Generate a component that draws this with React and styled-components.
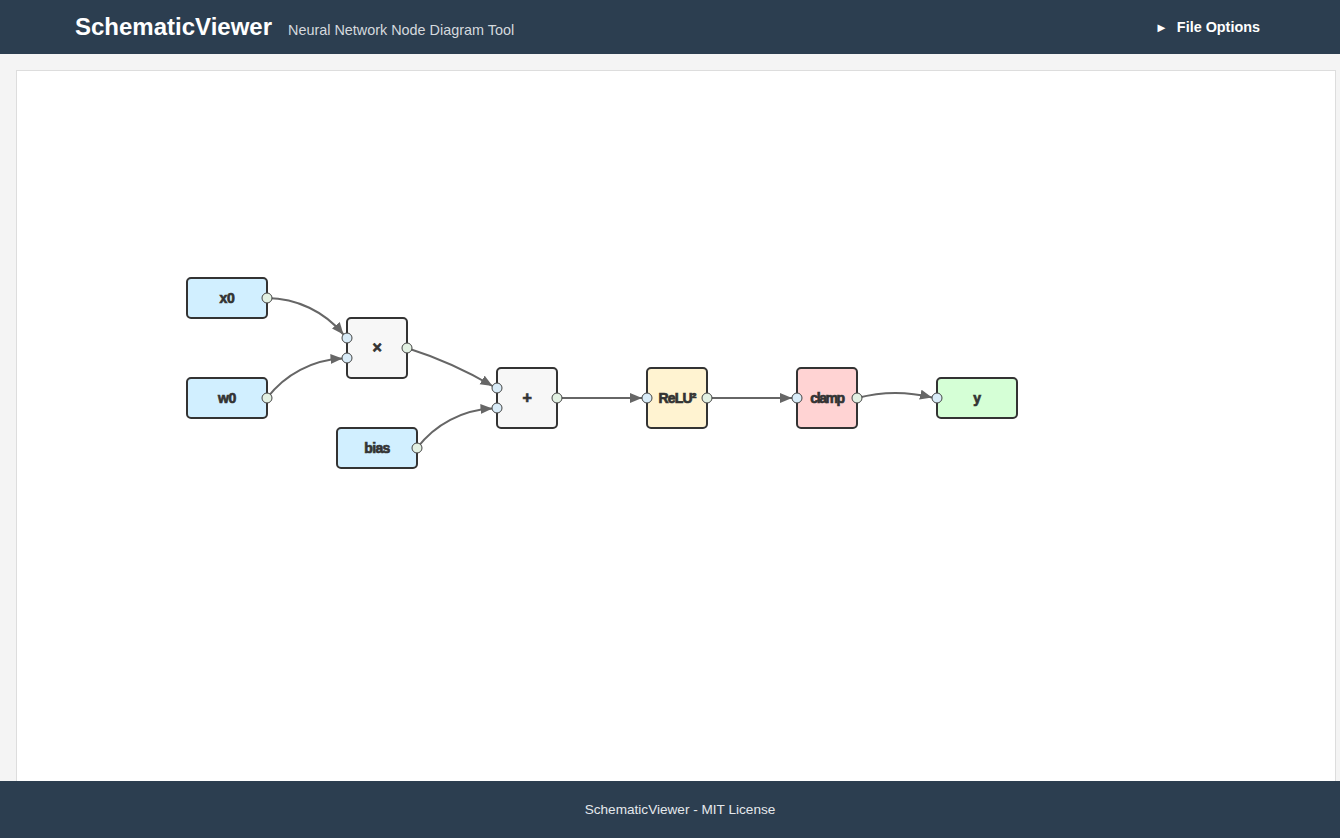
import React from 'react';
import styled, { createGlobalStyle } from 'styled-components';

const GlobalStyle = createGlobalStyle`
    html, body {
        margin: 0;
        padding: 0;
        height: 100%;
    }
    body {
        font-family: "Liberation Sans", Arial, sans-serif;
        background: #f4f4f4;
        color: #333;
    }
`;

const Page = styled.div`
    height: 100vh;
    display: flex;
    flex-direction: column;
    overflow: hidden;
`;

const Header = styled.header`
    flex: 0 0 54px;
    background: #2c3e50;
    display: flex;
    align-items: center;
    justify-content: space-between;
    padding: 0 80px 0 75px;
    color: #fff;
`;

const Brand = styled.div`
    display: flex;
    align-items: baseline;
    gap: 16px;
    margin-top: -1px;
`;

const Title = styled.h1`
    margin: 0;
    font-size: 24px;
    font-weight: 700;
    color: #fff;
`;

const Subtitle = styled.span`
    font-size: 14.4px;
    color: #d5d9de;
`;

const Options = styled.div`
    display: flex;
    align-items: center;
    gap: 9px;
    font-size: 14.4px;
    font-weight: 700;
    cursor: pointer;
`;

const Caret = styled.span`
    font-size: 13px;
    line-height: 1;
`;

const Main = styled.main`
    flex: 1;
    min-height: 0;
    padding: 16px 4px 0 16px;
`;

const Canvas = styled.div`
    height: 800px;
    background: #fff;
    border: 1px solid #ddd;
`;

const Diagram = styled.svg`
    display: block;
    width: 100%;
    height: 100%;
`;

const Footer = styled.footer`
    flex: 0 0 57px;
    background: #2c3e50;
    color: #e4e8ec;
    font-size: 13.6px;
    display: flex;
    align-items: center;
    justify-content: center;
    padding-left: 20px;
`;

const fills = {
    input: '#d1efff',
    op: '#f7f7f7',
    act: '#fff3d1',
    clamp: '#ffd3d3',
    output: '#d5ffd6',
};

const nodes = [
    { id: 'x0', x: 187, y: 278, w: 80, h: 40, kind: 'input', label: 'x0', out: [[267, 298]] },
    { id: 'w0', x: 187, y: 378, w: 80, h: 40, kind: 'input', label: 'w0', out: [[267, 398]] },
    { id: 'bias', x: 337, y: 428, w: 80, h: 40, kind: 'input', label: 'bias', out: [[417, 448]] },
    { id: 'mul', x: 347, y: 318, w: 60, h: 60, kind: 'op', label: '×', in: [[347, 338], [347, 358]], out: [[407, 348]] },
    { id: 'add', x: 497, y: 368, w: 60, h: 60, kind: 'op', label: '+', in: [[497, 388], [497, 408]], out: [[557, 398]] },
    { id: 'relu', x: 647, y: 368, w: 60, h: 60, kind: 'act', label: 'ReLU²', in: [[647, 398]], out: [[707, 398]], tight: -0.8 },
    { id: 'clamp', x: 797, y: 368, w: 60, h: 60, kind: 'clamp', label: 'clamp', in: [[797, 398]], out: [[857, 398]], tight: -1.4 },
    { id: 'y', x: 937, y: 378, w: 80, h: 40, kind: 'output', label: 'y', in: [[937, 398]] },
];

// edges as arcs between port points, r = 0 means a straight line
const edges = [
    { from: [267, 298], to: [343.5, 334.5], r: 100 },
    { from: [267, 398], to: [342.5, 358.5], r: 100 },
    { from: [407, 348], to: [492.5, 386], r: 420 },
    { from: [417, 448], to: [492.5, 408.5], r: 100 },
    { from: [557, 398], to: [642, 398], r: 0 },
    { from: [707, 398], to: [792, 398], r: 0 },
    { from: [857, 398], to: [932, 397.5], r: 150 },
];

const edgePath = ({ from, to, r }) =>
    r
        ? `M${from[0]},${from[1]} A${r},${r} 0 0 1 ${to[0]},${to[1]}`
        : `M${from[0]},${from[1]} L${to[0]},${to[1]}`;

const Port = ({ p, input }) => (
    <circle cx={p[0]} cy={p[1]} r={5} fill={input ? '#d9ecf8' : '#e3f1e3'} stroke="#444" strokeWidth={1} />
);

const Node = ({ node }) => (
    <g>
        <rect
            x={node.x}
            y={node.y}
            width={node.w}
            height={node.h}
            rx={4}
            fill={fills[node.kind]}
            stroke="#333"
            strokeWidth={2}
        />
        <text
            x={node.x + node.w / 2}
            y={node.y + node.h / 2 + 5}
            textAnchor="middle"
            fontFamily='"Liberation Sans", Arial, sans-serif'
            fontSize={node.label === '×' || node.label === '+' ? 16 : 14}
            fontWeight="700"
            fill="#333"
            stroke="#333"
            strokeWidth={0.7}
            letterSpacing={node.tight || (node.label.length > 2 ? -0.6 : -0.3)}
        >
            {node.label}
        </text>
        {(node.in || []).map((p, i) => (
            <Port key={`i${i}`} p={p} input />
        ))}
        {(node.out || []).map((p, i) => (
            <Port key={`o${i}`} p={p} />
        ))}
    </g>
);

const App = () => (
    <Page>
        <GlobalStyle />
        <Header>
            <Brand>
                <Title>SchematicViewer</Title>
                <Subtitle>Neural Network Node Diagram Tool</Subtitle>
            </Brand>
            <Options>
                <Caret>►</Caret>
                File Options
            </Options>
        </Header>
        <Main>
            <Canvas>
                <Diagram viewBox="17 71 1318 798" preserveAspectRatio="xMinYMin meet">
                    <defs>
                        <marker
                            id="arrow"
                            markerUnits="userSpaceOnUse"
                            markerWidth="13"
                            markerHeight="11"
                            refX="12"
                            refY="5"
                            orient="auto"
                        >
                            <path d="M0,0 L12,5 L0,10 z" fill="#666" />
                        </marker>
                    </defs>
                    {edges.map((e, i) => (
                        <path key={i} d={edgePath(e)} fill="none" stroke="#666" strokeWidth={2} markerEnd="url(#arrow)" />
                    ))}
                    {nodes.map(n => (
                        <Node key={n.id} node={n} />
                    ))}
                </Diagram>
            </Canvas>
        </Main>
        <Footer>SchematicViewer - MIT License</Footer>
    </Page>
);

export default App;
